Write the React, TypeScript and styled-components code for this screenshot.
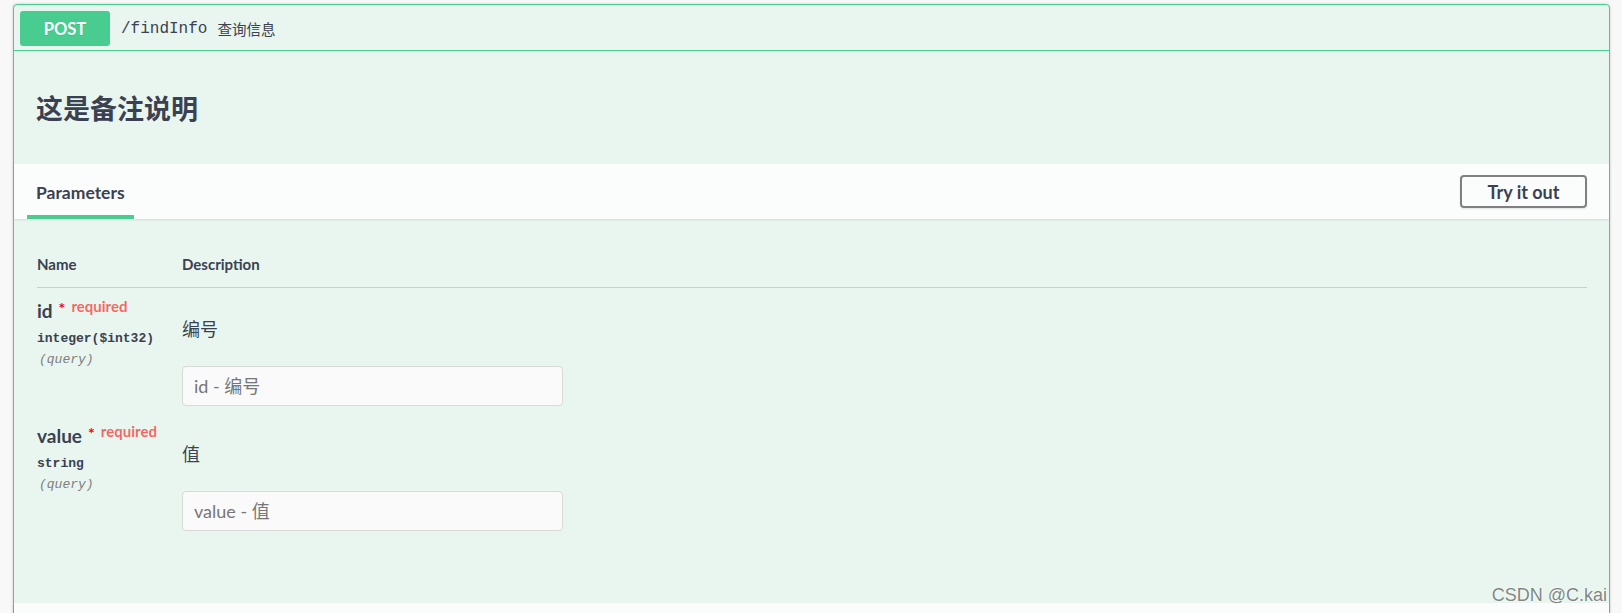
import React from "react";
import styled, { createGlobalStyle } from "styled-components";

const GlobalStyle = createGlobalStyle`
	html, body {
		margin: 0;
		padding: 0;
		background: #f8f8f8;
	}
	* {
		box-sizing: border-box;
	}
`;

const sans = `Lato, "Noto Sans CJK SC", sans-serif`;
const mono = `"Liberation Mono", "Noto Sans CJK SC", monospace`;

const Page = styled.div`
	position: relative;
	height: 613px;
	overflow: hidden;
	padding: 4px 12px 0 13px;
	font-family: ${sans};
	color: #3b4151;
`;

const Block = styled.div`
	border: 1px solid #49cc90;
	border-radius: 4px;
	background: #e8f6ef;
	box-shadow: 0 0 3px rgba(0, 0, 0, 0.19);
`;

const Summary = styled.div`
	display: flex;
	align-items: center;
	padding: 6px 5px 4px 6px;
	border-bottom: 1px solid #49cc90;
`;

const MethodBadge = styled.span`
	display: flex;
	align-items: center;
	justify-content: center;
	width: 90px;
	height: 35px;
	border-radius: 3px;
	background: #49cc90;
	color: #fff;
	font-size: 16.5px;
	font-weight: 700;
	text-shadow: 0 1px 0 rgba(0, 0, 0, 0.1);
`;

const PathText = styled.span`
	margin-left: 11px;
	font-family: ${mono};
	font-size: 16px;
	color: #3b4151;
`;

const SummaryDesc = styled.span`
	margin-left: 10px;
	font-size: 14.5px;
	color: #3b4151;
`;

const DescriptionWrapper = styled.div`
	display: flex;
	align-items: center;
	height: 113px;
	padding: 0 22px;
`;

const DescriptionTitle = styled.h3`
	margin: 0;
	font-size: 27px;
	font-weight: 700;
	color: #3b4151;
`;

const SectionHeader = styled.div`
	display: flex;
	align-items: stretch;
	justify-content: space-between;
	height: 55px;
	padding: 0 22px;
	background: rgba(255, 255, 255, 0.8);
	box-shadow: 0 1px 2px rgba(0, 0, 0, 0.1);
`;

const TabTitle = styled.h4`
	position: relative;
	display: flex;
	align-items: center;
	margin: 0;
	padding-top: 1px;
	font-size: 17.5px;
	font-weight: 700;
	color: #3b4151;

	&::after {
		content: "";
		position: absolute;
		left: -10%;
		bottom: 0;
		width: 120%;
		height: 4px;
		background: #49cc90;
	}
`;

const TryButton = styled.button`
	align-self: center;
	width: 127px;
	height: 33px;
	border: 2px solid #808080;
	border-radius: 4px;
	background: transparent;
	font-family: ${sans};
	font-size: 18px;
	font-weight: 700;
	color: #3b4151;
	box-shadow: 0 1px 2px rgba(0, 0, 0, 0.1);
`;

const TableWrapper = styled.div`
	padding: 0 22px 65px 23px;
`;

const TableHead = styled.div`
	display: grid;
	grid-template-columns: 145px 1fr;
	padding: 37px 0 15px;
	border-bottom: 1px solid rgba(59, 65, 81, 0.2);
	font-size: 15px;
	font-weight: 700;
	line-height: 16px;
`;

const ParamRow = styled.div`
	display: grid;
	grid-template-columns: 145px 1fr;
	padding: 11px 0 7px;
`;

const NameCell = styled.div`
	display: flex;
	flex-direction: column;
`;

const ParamName = styled.div`
	font-size: 19px;
	font-weight: 700;
	line-height: 24px;
`;

const Star = styled.span`
	position: relative;
	top: -4px;
	margin-left: 6px;
	font-size: 16px;
	color: red;
`;

const Required = styled.span`
	position: relative;
	top: -6px;
	margin-left: 6px;
	font-size: 15px;
	color: rgba(255, 0, 0, 0.6);
`;

const ParamType = styled.div`
	margin-top: 7px;
	font-family: ${mono};
	font-size: 13px;
	font-weight: 700;
	color: #3b4151;
`;

const ParamIn = styled.div`
	margin-top: 6px;
	margin-left: 2px;
	font-family: ${mono};
	font-size: 13px;
	font-style: italic;
	color: #808080;
`;

const DescCell = styled.div`
	display: flex;
	flex-direction: column;
`;

const DescText = styled.p`
	margin: 19px 0 0;
	font-size: 18px;
	line-height: 22px;
	color: #3b4151;
`;

const ParamInput = styled.input`
	width: 381px;
	height: 40px;
	margin-top: 26px;
	padding: 0 11px;
	border: 1px solid #d9d9d9;
	border-radius: 4px;
	background: #fafafa;
	font-family: ${sans};
	font-size: 18px;
	color: #3b4151;
	outline: none;

	&::placeholder {
		color: #767676;
	}
`;

const Watermark = styled.div`
	position: absolute;
	right: 15px;
	bottom: 7px;
	font-family: "Liberation Sans", Arial, sans-serif;
	font-size: 18px;
	color: rgba(110, 110, 110, 0.85);
	text-shadow: 0 0 2px #fff;
`;

interface IParam {
	name: string;
	type: string;
	desc: string;
}

const params: IParam[] = [
	{ name: "id", type: "integer($int32)", desc: "编号" },
	{ name: "value", type: "string", desc: "值" },
];

const App = () => {
	return (
		<Page>
			<GlobalStyle />
			<Block>
				<Summary>
					<MethodBadge>POST</MethodBadge>
					<PathText>/findInfo</PathText>
					<SummaryDesc>查询信息</SummaryDesc>
				</Summary>
				<DescriptionWrapper>
					<DescriptionTitle>这是备注说明</DescriptionTitle>
				</DescriptionWrapper>
				<SectionHeader>
					<TabTitle>Parameters</TabTitle>
					<TryButton>Try it out</TryButton>
				</SectionHeader>
				<TableWrapper>
					<TableHead>
						<div>Name</div>
						<div>Description</div>
					</TableHead>
					{params.map((p) => (
						<ParamRow key={p.name}>
							<NameCell>
								<ParamName>
									{p.name}
									<Star>*</Star>
									<Required>required</Required>
								</ParamName>
								<ParamType>{p.type}</ParamType>
								<ParamIn>(query)</ParamIn>
							</NameCell>
							<DescCell>
								<DescText>{p.desc}</DescText>
								<ParamInput placeholder={`${p.name} - ${p.desc}`} />
							</DescCell>
						</ParamRow>
					))}
				</TableWrapper>
				<SectionHeader />
			</Block>
			<Watermark>CSDN @C.kai</Watermark>
		</Page>
	);
};

export default App;
